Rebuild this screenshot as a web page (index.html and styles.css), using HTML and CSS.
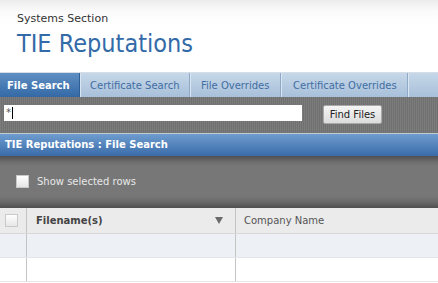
FILE: index.html
```html
<!DOCTYPE html>
<html>
<head>
<meta charset="utf-8">
<link rel="stylesheet" href="styles.css">
</head>
<body>
<header class="page-head">
  <div class="section">Systems Section</div>
  <h1 class="title">TIE Reputations</h1>
</header>
<nav class="tabs">
  <div class="tab active">File Search</div>
  <div class="tab">Certificate Search</div>
  <div class="tab">File Overrides</div>
  <div class="tab">Certificate Overrides</div>
  <div class="tab-fill"></div>
</nav>
<div class="search">
  <div class="input">*<span class="caret"></span></div>
  <button class="btn">Find Files</button>
</div>
<div class="panel-title">TIE Reputations : File Search</div>
<div class="toolbar">
  <label class="show"><span class="cb"></span>Show selected rows</label>
</div>
<div class="grid">
  <div class="row head">
    <div class="c c-check"><span class="cb small"></span></div>
    <div class="c c-name"><span>Filename(s)</span><span class="arrow"></span></div>
    <div class="c c-company">Company Name</div>
  </div>
  <div class="row alt">
    <div class="c c-check"></div>
    <div class="c c-name"></div>
    <div class="c c-company"></div>
  </div>
  <div class="row">
    <div class="c c-check"></div>
    <div class="c c-name"></div>
    <div class="c c-company"></div>
  </div>
</div>
</body>
</html>
```
FILE: styles.css
```css
* { box-sizing: border-box; }
html, body { margin: 0; padding: 0; }
body {
  width: 438px;
  height: 283px;
  overflow: hidden;
  font-family: "DejaVu Sans", Verdana, sans-serif;
  background: #fff;
}
.page-head {
  height: 72px;
  padding: 12px 0 0 17px;
  background: linear-gradient(#ececec 0, #fbfbfb 12px, #fff 24px);
}
.section {
  font-size: 11px;
  color: #333;
  line-height: 14px;
}
.title {
  margin: 3px 0 0 0;
  font-family: "DejaVu Sans Condensed", "DejaVu Sans", sans-serif;
  font-weight: normal;
  font-size: 25px;
  line-height: 29px;
  color: #336aa8;
}
.tabs {
  display: flex;
  height: 25px;
  border-top: 1px solid #d5dde6;
  background: linear-gradient(#c6d7e8, #a8c0da);
}
.tab {
  display: flex;
  align-items: center;
  padding: 0 9px;
  font-size: 10px;
  color: #3f6da3;
  border-right: 1px solid #8fa9c6;
  box-shadow: inset 1px 0 0 #d9e5f1;
  white-space: nowrap;
}
.tab.active {
  width: 80px;
  color: #fff;
  font-weight: bold;
  background: linear-gradient(#5f8fc3, #3469a6);
  border-right: 1px solid #2f5e96;
  box-shadow: none;
  padding-left: 7px;
}
.tab:nth-child(2) { width: 110px; padding-left: 10px; }
.tab:nth-child(3) { width: 91px; padding-left: 11px; }
.tab:nth-child(4) { width: 127px; padding-left: 12px; }
.tab-fill { flex: 1; box-shadow: inset 1px 0 0 #d9e5f1; }
.search {
  height: 37px;
  display: flex;
  align-items: flex-start;
  padding: 8px 0 0 4px;
  background: repeating-linear-gradient(90deg, #7c7c7c 0 1px, #707070 1px 2px);
  border-bottom: 1px solid #c3cad2;
}
.input {
  width: 298px;
  height: 16px;
  background: #fff;
  font-size: 10px;
  line-height: 16px;
  color: #555;
  padding-left: 2px;
  display: flex;
  align-items: center;
}
.caret {
  display: inline-block;
  width: 1px;
  height: 12px;
  background: #000;
  margin-left: 1px;
}
.btn {
  margin-left: 21px;
  width: 59px;
  height: 19px;
  padding: 0;
  font-family: inherit;
  font-size: 10px;
  color: #222;
  background: linear-gradient(#f5f5f5, #dcdcdc);
  border: 1px solid #a9a9a9;
  border-radius: 2px;
}
.panel-title {
  height: 22px;
  padding-left: 5px;
  font-size: 10px;
  font-weight: bold;
  line-height: 22px;
  color: #fff;
  background: linear-gradient(#6e9ccf, #3b6ca9);
}
.toolbar {
  height: 52px;
  padding: 19px 0 0 16px;
  background: linear-gradient(#4f4f4f 0, #6e6e6e 6px, #777 10px, #777 40px, #6a6a6a 46px, #4f4f4f 52px);
}
.show {
  display: flex;
  align-items: center;
  font-size: 10px;
  color: #e8e8e8;
}
.cb {
  display: inline-block;
  width: 13px;
  height: 13px;
  background: linear-gradient(#fff, #e6e6e6);
  border: 1px solid #c9c9c9;
  margin-right: 8px;
}
.cb.small { width: 13px; height: 13px; margin: 0; }
.grid { font-size: 10px; }
.row {
  display: flex;
  height: 24px;
  border-bottom: 1px solid #e4e7ea;
}
.row.head {
  height: 26px;
  background: #ebebeb;
  border-bottom: 1px solid #d8d8d8;
}
.row.alt { background: #edf1f5; }
.c {
  display: flex;
  align-items: center;
  border-right: 1px solid #c4c4c4;
}
.c-check { width: 27px; padding-left: 5px; }
.c-name { width: 209px; padding: 0 12px 0 9px; justify-content: space-between; }
.c-company { flex: 1; padding-left: 8px; border-right: none; color: #555; }
.head .c-name { font-weight: bold; color: #444; }
.arrow {
  width: 0;
  height: 0;
  border-left: 4px solid transparent;
  border-right: 4px solid transparent;
  border-top: 7px solid #6a6a6a;
}
```
